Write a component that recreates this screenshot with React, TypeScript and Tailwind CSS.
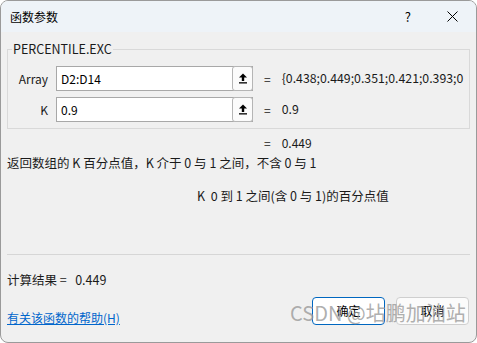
const font = { fontFamily: '"Noto Sans CJK SC", "Noto Sans", sans-serif' };

const UpArrow = () => (
  <svg width="10" height="11" viewBox="0 0 10 11" fill="#000">
    <path d="M5 0.5 L9 4.5 L6.2 4.5 L6.2 8 L3.8 8 L3.8 4.5 L1 4.5 Z" />
    <rect x="1" y="9.2" width="8" height="1.3" />
  </svg>
);

const ArgRow = ({ label, value, result }: { label: string; value: string; result: string }) => (
  <div className="flex items-center h-[25px]">
    <div className="w-[40px] text-right text-[12px] text-[#1a1a1a]">{label}</div>
    <div className="ml-[8px] w-[197px] h-[25px] flex bg-white border border-[#a8a8a8]">
      <div className="flex-1 pl-[4px] flex items-center text-[12px] text-black">{value}</div>
      <div className="w-[21px] h-[25px] -mt-px -mr-px flex items-center justify-center border border-[#b5b5b5] rounded-[3px] bg-[#fbfbfb]">
        <UpArrow />
      </div>
    </div>
    <div className="ml-[11px] text-[12px] text-[#1a1a1a]">=</div>
    <div className="ml-[11px] text-[12.3px] text-[#1a1a1a] whitespace-nowrap">{result}</div>
  </div>
);

export default function App() {
  return (
    <div className="w-[477px] h-[343px] bg-white overflow-hidden" style={font}>
      <div className="w-[477px] h-[343px] bg-[#f0f0f0] border border-[#9a9a9a] rounded-[8px] overflow-hidden flex flex-col">
        <div className="h-[31px] bg-[#eef3f8] flex items-center px-[9px] shrink-0">
          <span className="text-[12px] text-black">函数参数</span>
          <span className="ml-auto text-[13px] text-black mr-[36px]">?</span>
          <svg width="11" height="11" viewBox="0 0 11 11" className="mr-[9px]">
            <path d="M0.5 0.5 L10.5 10.5 M10.5 0.5 L0.5 10.5" stroke="#000" strokeWidth="1" />
          </svg>
        </div>

        <div className="px-[6px] flex-1 flex flex-col">
          <div className="relative mt-[17px] w-[463px] border border-[#d9d9d9] pt-[16px] pb-[6px] flex flex-col gap-[6px]">
            <span className="absolute -top-[9px] left-[4px] px-[1px] bg-[#f0f0f0] text-[12.5px] text-[#1a1a1a] leading-[16px]">
              PERCENTILE.EXC
            </span>
            <ArgRow label="Array" value="D2:D14" result="{0.438;0.449;0.351;0.421;0.393;0" />
            <ArgRow label="K" value="0.9" result="0.9" />
          </div>

          <div className="mt-[6px] flex text-[12px] leading-[16px] text-[#1a1a1a]">
            <span className="ml-[257px]">=</span>
            <span className="ml-[11px]">0.449</span>
          </div>
          <div className="mt-[4px] text-[12.5px] leading-[16px] text-[#1a1a1a] whitespace-pre">
            返回数组的 K 百分点值，K 介于 0 与 1 之间，不含 0 与 1
          </div>
          <div className="mt-[17px] ml-[190px] text-[12.5px] leading-[16px] text-[#1a1a1a] whitespace-pre">
            K  0 到 1 之间(含 0 与 1)的百分点值
          </div>

          <div className="mt-[50px] w-[463px] h-px bg-[#d6d6d6]" />

          <div className="mt-[17px] text-[12.5px] leading-[16px] text-[#1a1a1a] whitespace-pre">
            计算结果 =   0.449
          </div>

          <div className="relative mt-[7px] flex items-center">
            <a href="#" className="mt-[14px] text-[12px] text-[#0066cc] underline">
              有关该函数的帮助(H)
            </a>
            <button className="ml-auto w-[73px] h-[28px] bg-white border border-[#0067c0] rounded-[4px] text-[12px] text-black">
              确定
            </button>
            <button className="ml-[11px] mr-[1px] w-[73px] h-[28px] bg-[#fbfbfb] border border-[#cfcfcf] rounded-[4px] text-[12px] text-black">
              取消
            </button>
            <span className="absolute left-[283px] top-[3px] text-[20px] text-[#9a9a9a]/80 whitespace-nowrap pointer-events-none">
              CSDN @坫鹏加油站
            </span>
          </div>
        </div>
      </div>
    </div>
  );
}
